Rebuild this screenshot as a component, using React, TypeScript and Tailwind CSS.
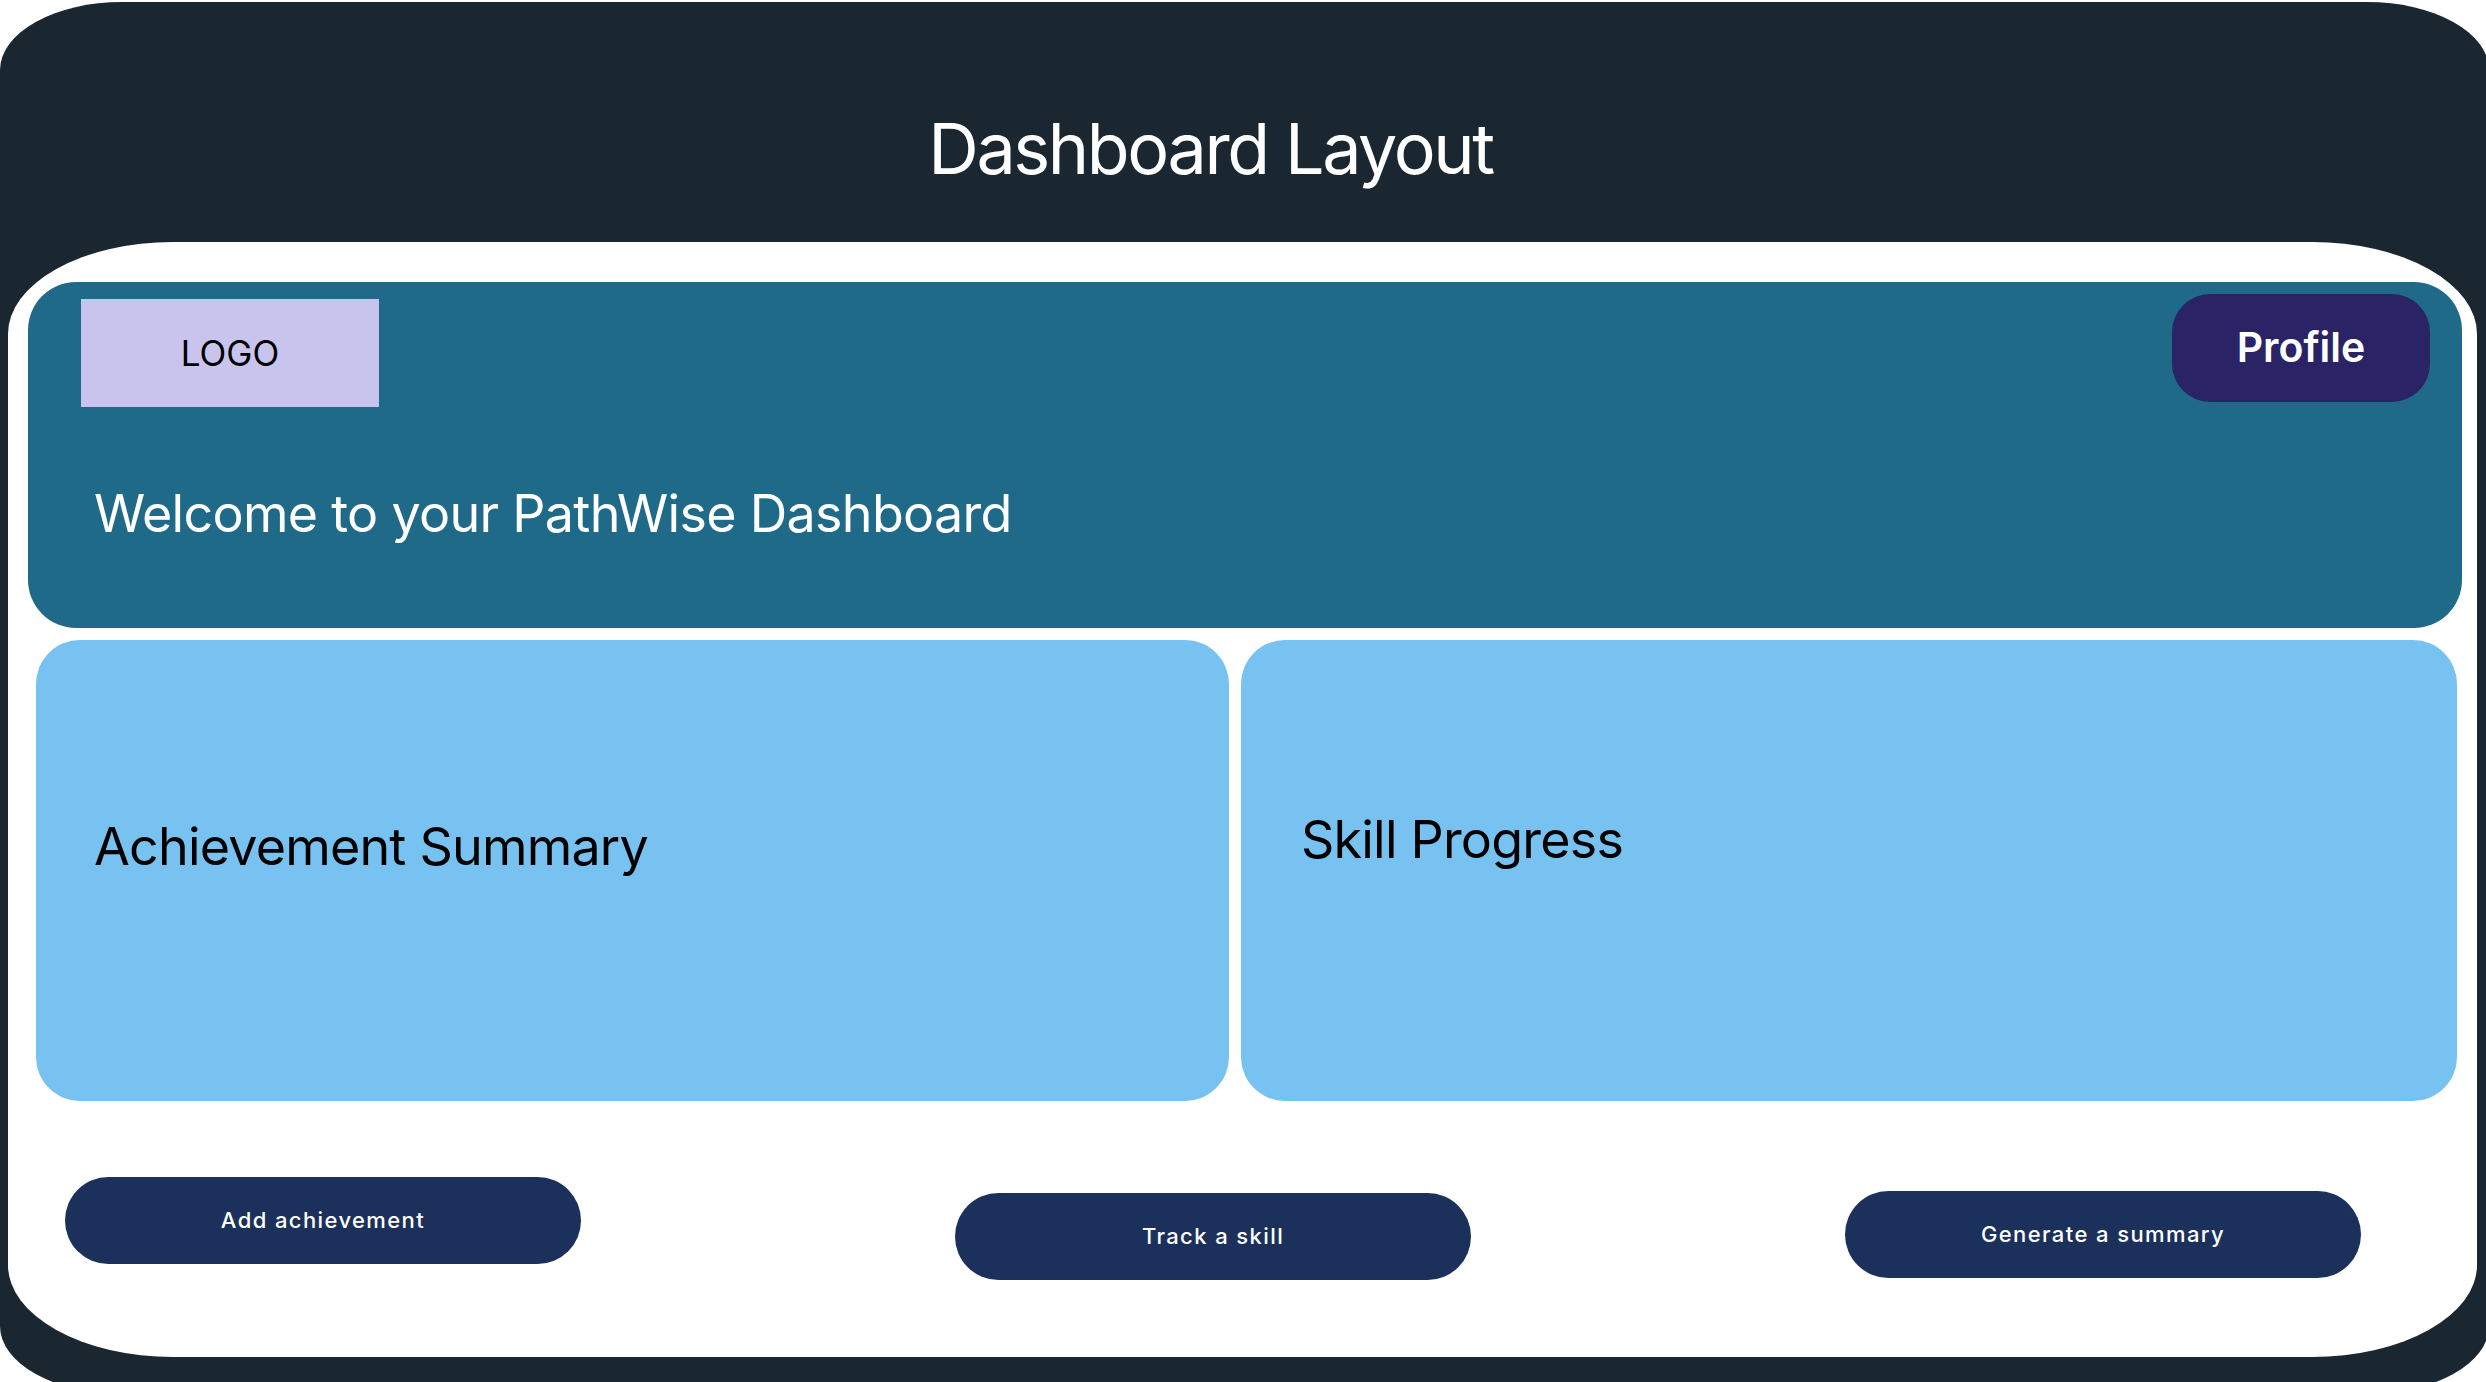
import React from "react";

const font = { fontFamily: "Inter, 'Noto Sans', 'Liberation Sans', sans-serif" };

function ActionButton({ label, className }: { label: string; className?: string }) {
  return (
    <button
      className={
        "flex h-[87px] w-[516px] shrink-0 items-center justify-center rounded-full bg-[#1b305a] text-[22px] font-medium tracking-[1.4px] text-white " +
        (className ?? "")
      }
    >
      {label}
    </button>
  );
}

export default function App() {
  return (
    <div className="h-[1382px] w-[2486px] overflow-hidden bg-white" style={font}>
      <div className="mt-[2px] flex h-[1392px] w-[2489px] flex-col rounded-[122px/68px] bg-[#1a2630]">
        {/* Title area */}
        <div className="flex h-[240px] shrink-0 items-start justify-center pr-[68px] pt-[112px]">
          <h1 className="text-[70px] font-normal leading-none tracking-[-2.4px] text-white">Dashboard Layout</h1>
        </div>

        {/* White screen */}
        <div className="ml-[8px] flex h-[1115px] w-[2469px] flex-col rounded-[165px/92px] bg-white">
          {/* Header */}
          <div className="ml-[20px] mt-[40px] flex h-[346px] w-[2434px] flex-col rounded-[48px] bg-[#206a89]">
            <div className="flex items-start justify-between pl-[53px] pr-[32px]">
              <div className="mt-[17px] flex h-[108px] w-[298px] items-center justify-center bg-[#c9c4ee] text-[35px] text-black">
                LOGO
              </div>
              <button className="mt-[12px] flex h-[108px] w-[258px] items-center justify-center rounded-[38px] bg-[#2a2366] text-[41px] font-semibold text-white">
                Profile
              </button>
            </div>
            <div className="ml-[66px] mt-[81px] text-[52px] leading-none tracking-[-0.7px] text-white">
              Welcome to your PathWise Dashboard
            </div>
          </div>

          {/* Cards */}
          <div className="ml-[28px] mt-[12px] flex gap-[12px]">
            <div className="flex h-[461px] w-[1193px] flex-col rounded-[44px] bg-[#77c2f0] pl-[58px] pt-[181px]">
              <div className="text-[52px] leading-none tracking-[-0.8px] text-black">Achievement Summary</div>
            </div>
            <div className="flex h-[461px] w-[1216px] flex-col rounded-[44px] bg-[#77c2f0] pl-[60px] pt-[174px]">
              <div className="text-[52px] leading-none tracking-[-0.8px] text-black">Skill Progress</div>
            </div>
          </div>

          {/* Buttons */}
          <div className="ml-[57px] mt-[76px] flex items-start gap-[374px]">
            <ActionButton label="Add achievement" />
            <ActionButton label="Track a skill" className="mt-[16px]" />
            <ActionButton label="Generate a summary" className="mt-[14px]" />
          </div>
        </div>
      </div>
    </div>
  );
}
